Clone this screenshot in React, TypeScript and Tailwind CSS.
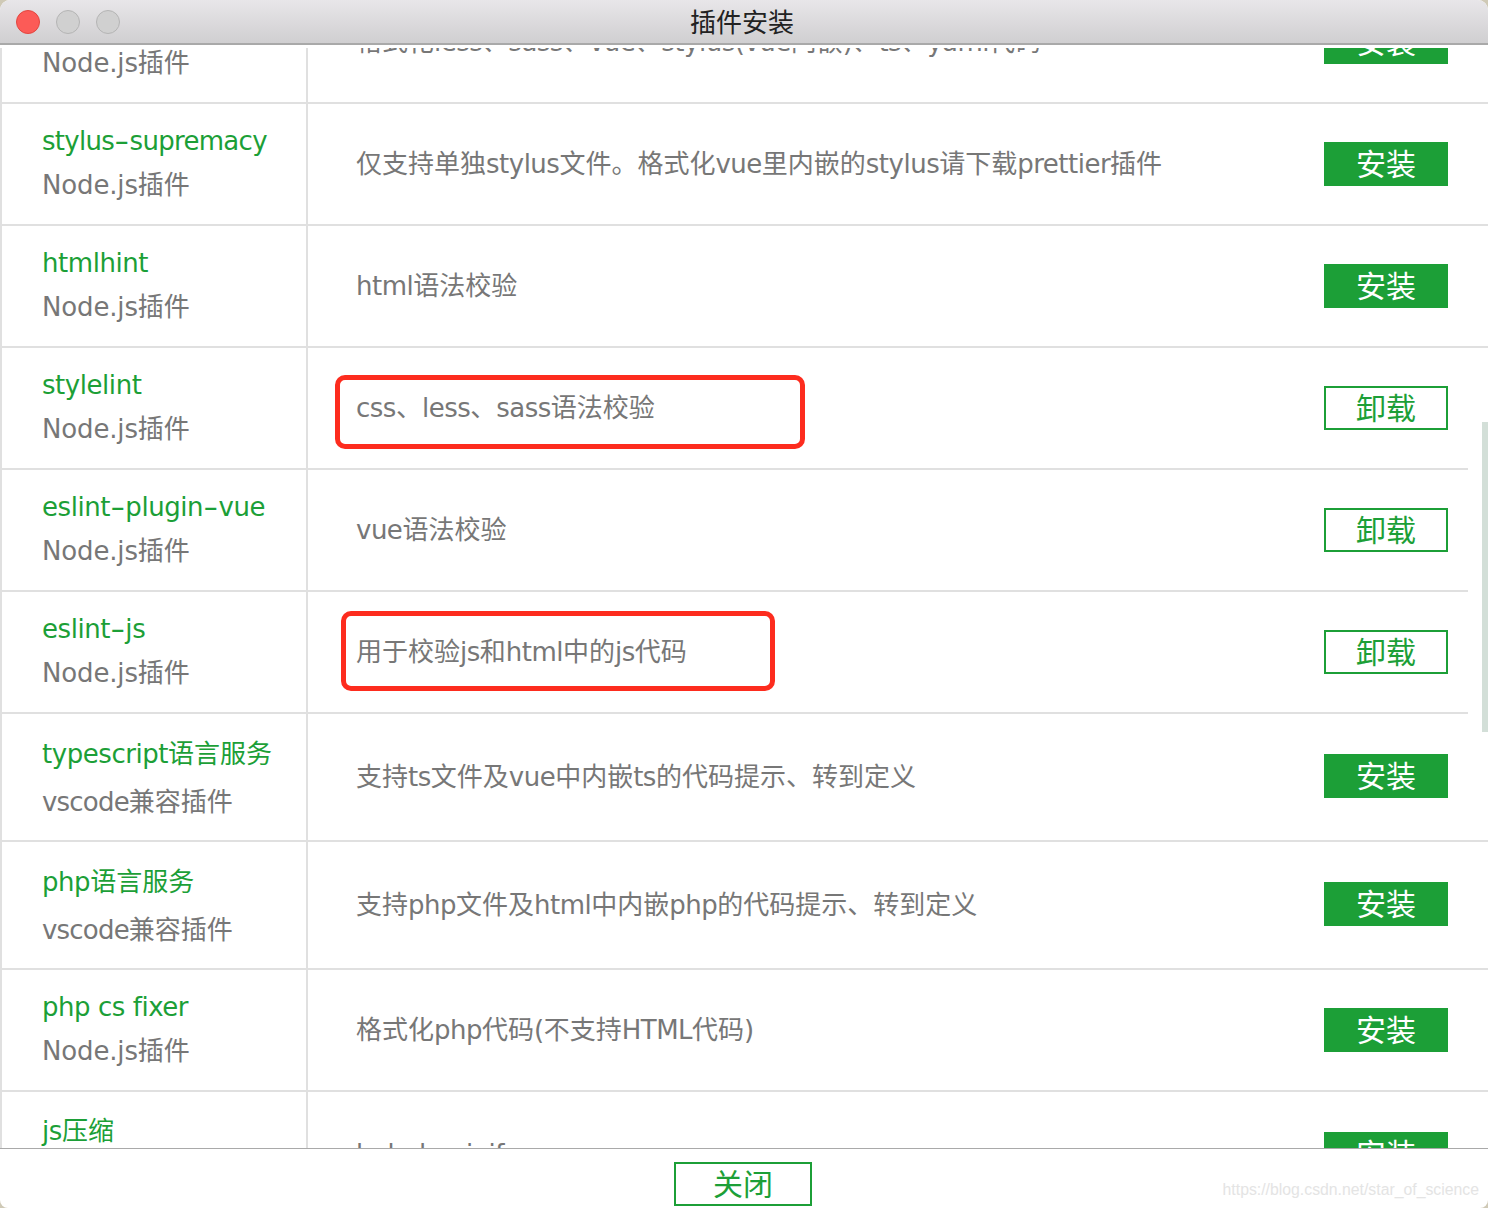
const F = "font-['DejaVu_Sans','Noto_Sans_CJK_SC',sans-serif]";

type Row = { name: string; kind: string; desc: string; action: "安装" | "卸载"; size: "normal" | "tall" | "last"; nameTrack?: string };

const rows: Row[] = [
  { name: "prettier", kind: "Node.js插件", desc: "格式化less、sass、vue、stylus(vue内嵌)、ts、yaml代码", action: "安装", size: "normal" },
  { name: "stylus-supremacy", kind: "Node.js插件", desc: "仅支持单独stylus文件。格式化vue里内嵌的stylus请下载prettier插件", action: "安装", size: "normal", nameTrack: "tracking-[-0.7px]" },
  { name: "htmlhint", kind: "Node.js插件", desc: "html语法校验", action: "安装", size: "normal" },
  { name: "stylelint", kind: "Node.js插件", desc: "css、less、sass语法校验", action: "卸载", size: "normal" },
  { name: "eslint-plugin-vue", kind: "Node.js插件", desc: "vue语法校验", action: "卸载", size: "normal" },
  { name: "eslint-js", kind: "Node.js插件", desc: "用于校验js和html中的js代码", action: "卸载", size: "normal" },
  { name: "typescript语言服务", kind: "vscode兼容插件", desc: "支持ts文件及vue中内嵌ts的代码提示、转到定义", action: "安装", size: "tall" },
  { name: "php语言服务", kind: "vscode兼容插件", desc: "支持php文件及html中内嵌php的代码提示、转到定义", action: "安装", size: "tall" },
  { name: "php cs fixer", kind: "Node.js插件", desc: "格式化php代码(不支持HTML代码)", action: "安装", size: "normal" },
  { name: "js压缩", kind: "Node.js插件", desc: "babel-minify", action: "安装", size: "last" },
];

function Txt({ text, latin = "tracking-[-0.45px]" }: { text: string; latin?: string }) {
  const parts = text.split(/(-|[\x20-\x2c\x2e-\x7e]+)/).filter(Boolean);
  return (
    <>
      {parts.map((p, i) =>
        p === "-" ? (
          <span key={i} className="inline-block scale-x-[1.6] mx-[3px]">-</span>
        ) : /^[\x20-\x7e]+$/.test(p) ? (
          <span key={i} className={latin}>{p}</span>
        ) : (
          <span key={i}>{p}</span>
        )
      )}
    </>
  );
}

function Plugin({ row }: { row: Row }) {
  const tall = row.size === "tall";
  const height = tall ? "h-[128px]" : row.size === "last" ? "h-[126px]" : "h-[122px]";
  return (
    <div className={`flex border-b-2 border-[#e0e0e0] ${height}`}>
      <div
        className={`w-[308px] shrink-0 border-x-2 border-[#e0e0e0] pl-[40px] flex flex-col justify-center text-[26px] whitespace-nowrap ${
          tall ? "pt-[2px] leading-[48px]" : "pb-[2px] leading-[44px]"
        }`}
      >
        <div className="text-[#1c9f37]"><Txt text={row.name} latin={row.nameTrack} /></div>
        <div className="text-[#777777]">
          <Txt text={row.kind} latin={tall ? "tracking-[-0.8px]" : "tracking-[-0.15px]"} />
        </div>
      </div>
      <div
        className={`flex-1 pl-[48px] flex items-center text-[26px] text-[#777777] whitespace-nowrap ${
          tall ? "" : "pt-[1px]"
        }`}
      >
        <div><Txt text={row.desc} latin="tracking-[-0.5px]" /></div>
      </div>
      <div className={`flex items-center pr-[40px] ${tall ? "pb-[2px]" : ""}`}>
        <button
          className={`w-[124px] h-[44px] pt-[2px] text-[30px] leading-none flex items-center justify-center ${
            row.action === "安装" ? "bg-[#1c9f37] text-white" : "border-2 border-[#1c9f37] text-[#1c9f37]"
          }`}
        >
          {row.action}
        </button>
      </div>
    </div>
  );
}

export default function App() {
  return (
    <div className="w-[1488px] h-[1208px] bg-[#cfc9b6]">
      <div className={`${F} relative w-full h-full bg-white flex flex-col overflow-hidden rounded-t-[10px] rounded-b-[8px]`}>
        <header className="h-[45px] shrink-0 relative flex items-center justify-center pt-[3px] pr-[4px] bg-gradient-to-b from-[#e8e6e9] to-[#d0cfd1] border-b-2 border-[#a9a9a9]">
          <div className="absolute left-[16px] top-[10px] flex gap-[16px]">
            <span className="w-6 h-6 rounded-full bg-[#fc5b57] border border-[#e2463f]" />
            <span className="w-6 h-6 rounded-full bg-[#d0d0d0] border border-[#b4b4b4]" />
            <span className="w-6 h-6 rounded-full bg-[#d0d0d0] border border-[#b4b4b4]" />
          </div>
          <span className="text-[26px] leading-none text-[#222222]">插件安装</span>
        </header>
        <main className="relative mt-[3px] flex-1 overflow-hidden">
          <div className="-mt-[66px]">
            {rows.map((r) => (
              <Plugin key={r.name} row={r} />
            ))}
          </div>
          <div className="absolute right-0 top-[374px] w-[20px] h-[310px] bg-white flex justify-end">
            <div className="w-[6px] h-full bg-[#d3dfd8]" />
          </div>
        </main>
        <footer className="h-[60px] shrink-0 border-t border-[#a9a9a9] relative flex justify-center pt-[13px] pr-[2px]">
          <button className="w-[138px] h-[44px] pt-[2px] border-2 border-[#1c9f37] text-[30px] leading-none text-[#1c9f37] flex items-center justify-center">
            关闭
          </button>
          <span className="absolute right-[9px] top-[29px] text-[15.8px] text-[#e4e4e4] font-['Liberation_Sans',sans-serif]">
            https://blog.csdn.net/star_of_science
          </span>
        </footer>
        <div className="absolute left-[335px] top-[375px] w-[470px] h-[74px] rounded-[10px] border-[5px] border-[#fd2c1e]" />
        <div className="absolute left-[341px] top-[611px] w-[434px] h-[80px] rounded-[10px] border-[5px] border-[#fd2c1e]" />
      </div>
    </div>
  );
}
